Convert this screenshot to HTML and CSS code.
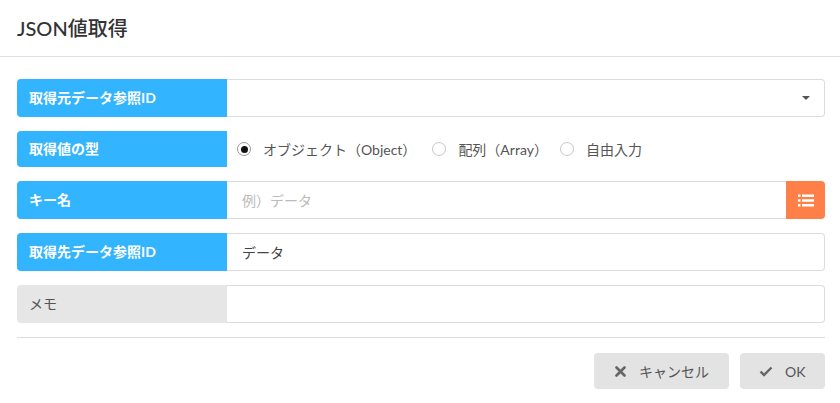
FILE: index.html
```html
<!DOCTYPE html>
<html lang="ja">
<head>
<meta charset="utf-8">
<link rel="stylesheet" href="styles.css">
</head>
<body>
<div class="dialog">
  <div class="header"><h1 class="title">JSON値取得</h1></div>
  <div class="body">
    <div class="row">
      <div class="label">取得元データ参照ID</div>
      <div class="field select">
        <span class="value"></span>
        <span class="caret"></span>
      </div>
    </div>
    <div class="row short">
      <div class="label">取得値の型</div>
      <div class="radios">
        <label class="radio"><span class="dot checked"></span>オブジェクト（Object）</label>
        <label class="radio"><span class="dot"></span>配列（Array）</label>
        <label class="radio"><span class="dot"></span>自由入力</label>
      </div>
    </div>
    <div class="row">
      <div class="label">キー名</div>
      <div class="field addon">
        <span class="value placeholder">例）データ</span>
      </div>
      <div class="listbtn">
        <svg width="16" height="13" viewBox="0 0 16 13"><g fill="#fff"><rect x="0" y="0.5" width="2.5" height="2.5"/><rect x="4" y="0.5" width="12" height="2.5"/><rect x="0" y="5.25" width="2.5" height="2.5"/><rect x="4" y="5.25" width="12" height="2.5"/><rect x="0" y="10" width="2.5" height="2.5"/><rect x="4" y="10" width="12" height="2.5"/></g></svg>
      </div>
    </div>
    <div class="row">
      <div class="label">取得先データ参照ID</div>
      <div class="field"><span class="value">データ</span></div>
    </div>
    <div class="row">
      <div class="label memo">メモ</div>
      <div class="field"><span class="value"></span></div>
    </div>
  </div>
  <div class="footer">
    <button class="btn"><svg width="11" height="11" viewBox="0 0 11 11"><path d="M1.5 1.5 L9.5 9.5 M9.5 1.5 L1.5 9.5" stroke="#666" stroke-width="2.6" stroke-linecap="round"/></svg>キャンセル</button>
    <button class="btn ok"><svg width="14" height="11" viewBox="0 0 14 11"><path d="M1.5 5.5 L5 9 L12.5 1.5" fill="none" stroke="#666" stroke-width="2.4"/></svg>OK</button>
  </div>
</div>
</body>
</html>
```
FILE: styles.css
```css
html, body {
  margin: 0;
  padding: 0;
  background: #fff;
}
body {
  font-family: "Lato", "Noto Sans CJK JP", sans-serif;
  color: #444;
  width: 840px;
  height: 403px;
  overflow: hidden;
}
.header {
  height: 57px;
  border-bottom: 1px solid #e0e0e0;
  box-sizing: border-box;
  display: flex;
  align-items: center;
  padding: 0 17px 2px;
}
.title {
  margin: 0;
  font-size: 20px;
  font-weight: 500;
  color: #333;
}
.body {
  padding: 22px 15px 0 17px;
  display: flex;
  flex-direction: column;
  gap: 14px;
}
.row {
  display: flex;
  height: 38px;
}
.row.short {
  height: 36px;
}
.label {
  width: 210px;
  flex: none;
  background: #33b4fe;
  color: #fff;
  font-weight: 700;
  font-size: 14px;
  border-radius: 4px 0 0 4px;
  display: flex;
  align-items: center;
  padding-left: 12px;
  padding-bottom: 2px;
  box-sizing: border-box;
}
.label.memo {
  background: #e6e6e6;
  color: #555;
  font-weight: 400;
}
.field {
  flex: 1;
  border: 1px solid #dcdcdc;
  border-left: none;
  border-radius: 0 4px 4px 0;
  display: flex;
  align-items: center;
  padding-left: 15px;
  padding-right: 14px;
  font-size: 14px;
  color: #444;
}
.field.addon {
  border-radius: 0;
  border-right: none;
}
.value { flex: 1; }
.placeholder { color: #bbb; }
.caret {
  width: 0;
  height: 0;
  border-left: 4px solid transparent;
  border-right: 4px solid transparent;
  border-top: 4px solid #555;
}
.listbtn {
  width: 39px;
  flex: none;
  background: #ff7f48;
  border-radius: 0 4px 4px 0;
  display: flex;
  align-items: center;
  justify-content: center;
}
.radios {
  display: flex;
  align-items: center;
  padding-left: 10px;
  font-size: 14px;
  color: #555;
}
.radio {
  display: flex;
  align-items: center;
  margin-right: 16px;
}
.radio:nth-child(2) {
  margin-right: 12px;
}
.dot {
  width: 14px;
  height: 14px;
  border: 1px solid #c8c8c8;
  border-radius: 50%;
  box-sizing: border-box;
  margin-right: 12px;
  position: relative;
  background: #fff;
}
.dot.checked {
  border-color: #999;
}
.dot.checked::after {
  content: "";
  position: absolute;
  left: 2.5px;
  top: 2.5px;
  width: 7px;
  height: 7px;
  border-radius: 50%;
  background: #111;
}
.footer {
  margin: 14px 15px 0 17px;
  border-top: 1px solid #dcdcdc;
  padding-top: 15px;
  display: flex;
  justify-content: flex-end;
  gap: 11px;
}
.btn {
  height: 36px;
  border: none;
  border-radius: 4px;
  background: #e3e3e3;
  color: #555;
  font-family: inherit;
  font-size: 14px;
  display: flex;
  align-items: center;
  gap: 13px;
  padding: 0 20px 0 21px;
}
.btn.ok {
  width: 85px;
  padding: 0 0 0 19px;
  gap: 12px;
}
```
